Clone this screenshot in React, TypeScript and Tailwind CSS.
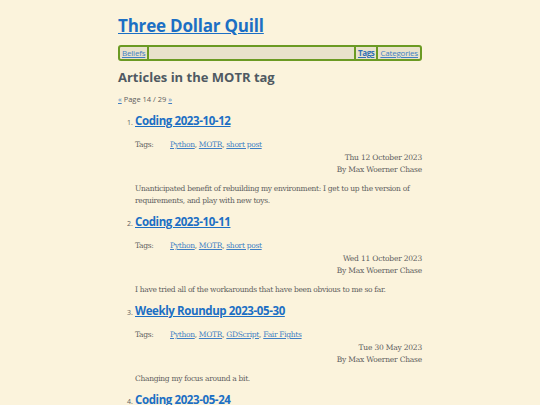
import React from 'react'

const articles = [
  {
    n: 1,
    title: 'Coding 2023-10-12',
    tags: ['Python', 'MOTR', 'short post'],
    date: 'Thu 12 October 2023',
    summary:
      'Unanticipated benefit of rebuilding my environment: I get to up the version of requirements, and play with new toys.',
  },
  {
    n: 2,
    title: 'Coding 2023-10-11',
    tags: ['Python', 'MOTR', 'short post'],
    date: 'Wed 11 October 2023',
    summary: 'I have tried all of the workarounds that have been obvious to me so far.',
  },
  {
    n: 3,
    title: 'Weekly Roundup 2023-05-30',
    tags: ['Python', 'MOTR', 'GDScript', 'Fair Fights'],
    date: 'Tue 30 May 2023',
    summary: 'Changing my focus around a bit.',
  },
  {
    n: 4,
    title: 'Coding 2023-05-24',
    tags: ['Python', 'MOTR', 'short post'],
    date: 'Wed 24 May 2023',
    summary: 'Not much today.',
  },
]

const heading = { fontFamily: '"Open Sans", "Noto Sans", sans-serif' }
const body = { fontFamily: '"DejaVu Serif", "Liberation Serif", serif' }

export default function App() {
  return (
    <div className="h-[405px] overflow-hidden bg-[#fbf3dc] text-[#5e5e5e]" style={body}>
      <div className="mx-auto w-[304px] pt-[14px]">
        {/* Site title */}
        <h1 className="text-[17px] font-bold leading-[24px] tracking-[-0.2px]" style={heading}>
          <a href="#" className="text-[#1c6fc4] underline">
            Three Dollar Quill
          </a>
        </h1>

        {/* Menu bar */}
        <nav
          className="mt-[7px] flex h-[16px] items-stretch rounded-[3px] border-2 border-[#6b9a23] bg-[#e9e2cb] px-[1px] text-[8px] leading-[12px] tracking-[-0.2px]"
          style={heading}
        >
          <a href="#" className="px-[1px] text-[#3f7fc4] underline">
            Beliefs
          </a>
          <span className="mx-[1px] w-[2px] bg-[#6b9a23]" />
          <span className="flex-1" />
          <span className="mx-[1px] w-[2px] bg-[#6b9a23]" />
          <a href="#" className="px-[1px] font-bold tracking-[-0.4px] text-[#2f6fb4] underline">
            Tags
          </a>
          <span className="mx-[1px] w-[2px] bg-[#6b9a23]" />
          <a href="#" className="px-[1px] text-[#3f7fc4] underline">
            Categories
          </a>
        </nav>

        <h2 className="mt-[6px] text-[13px] font-bold leading-[20px] text-[#4f5962]" style={heading}>
          Articles in the MOTR tag
        </h2>

        <p className="mt-[6px] text-[7.5px] leading-[12px]" style={heading}>
          <a href="#" className="text-[#3f7fc4] underline">
            «
          </a>{' '}
          Page 14 / 29{' '}
          <a href="#" className="text-[#3f7fc4] underline">
            »
          </a>
        </p>

        <ol className="mt-[7px] pl-[17px]">
          {articles.map((a) => (
            <li key={a.n} className="mb-[6px]">
              <div className="flex items-baseline">
                <span className="-ml-[8px] w-[8px] text-[7px]" style={heading}>
                  {a.n}.
                </span>
                <a
                  href="#"
                  className="text-[11.5px] font-bold leading-[18px] tracking-[-0.4px] text-[#1c6fc4] underline"
                  style={heading}
                >
                  {a.title}
                </a>
              </div>

              <div className="mt-[9px] flex text-[7.5px] leading-[12px] tracking-[-0.3px]">
                <span className="w-[35px]">Tags:</span>
                <span>
                  {a.tags.map((t, i) => (
                    <React.Fragment key={t}>
                      <a href="#" className="text-[#3f7fc4] underline">
                        {t}
                      </a>
                      {i < a.tags.length - 1 && ', '}
                    </React.Fragment>
                  ))}
                </span>
              </div>

              <div className="mt-[1px] text-right text-[7.5px] leading-[12px] tracking-[-0.2px]">
                <div>{a.date}</div>
                <div>By Max Woerner Chase</div>
              </div>

              <p className="mt-[7px] text-[7.5px] leading-[12px] tracking-[-0.3px]">{a.summary}</p>
            </li>
          ))}
        </ol>
      </div>
    </div>
  )
}
